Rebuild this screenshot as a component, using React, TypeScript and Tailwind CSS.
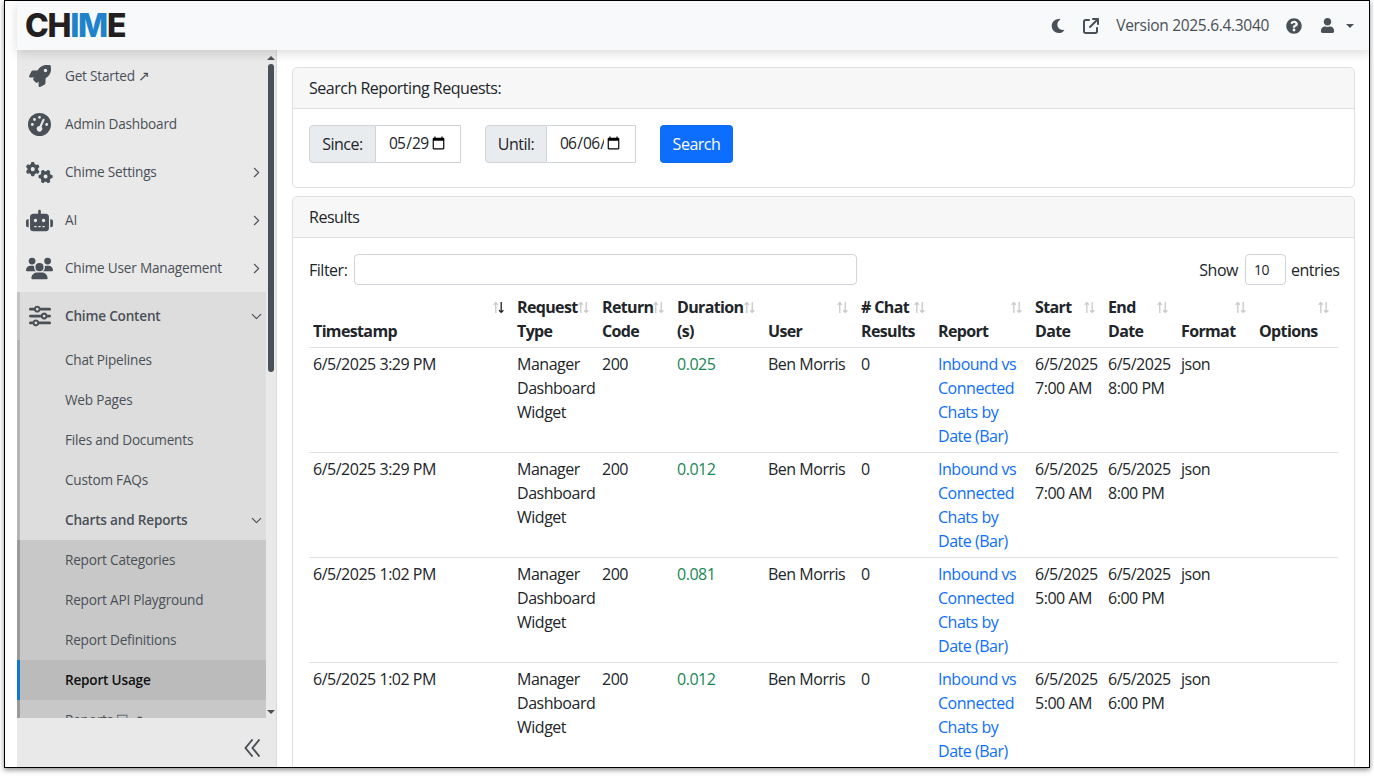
import React from 'react';
import { FaRocket, FaMoon, FaQuestionCircle, FaUser } from 'react-icons/fa';
import { FaGaugeHigh, FaGears, FaRobot, FaUsers, FaSliders, FaArrowUpRightFromSquare } from 'react-icons/fa6';
import { ChevronRight, ChevronDown } from 'lucide-react';

const mainNav = [
  { label: 'Get Started ↗', icon: <FaRocket className="text-[22px]" /> },
  { label: 'Admin Dashboard', icon: <FaGaugeHigh className="text-[23px]" /> },
  { label: 'Chime Settings', icon: <FaGears className="text-[27px]" />, arrow: true },
  { label: 'AI', icon: <FaRobot className="text-[27px]" />, arrow: true },
  { label: 'Chime User Management', icon: <FaUsers className="text-[27px]" />, arrow: true },
];

const contentNav = ['Chat Pipelines', 'Web Pages', 'Files and Documents', 'Custom FAQs'];
const reportNav = ['Report Categories', 'Report API Playground', 'Report Definitions'];

const columns = [
  { label: 'Timestamp', width: 'w-[204px]' },
  { label: 'Request Type', width: 'w-[85px]' },
  { label: 'Return Code', width: 'w-[75px]' },
  { label: 'Duration (s)', width: 'w-[91px]' },
  { label: 'User', width: 'w-[93px]' },
  { label: '# Chat Results', width: 'w-[77px]' },
  { label: 'Report', width: 'w-[97px]' },
  { label: 'Start Date', width: 'w-[73px]' },
  { label: 'End Date', width: 'w-[73px]' },
  { label: 'Format', width: 'w-[78px]' },
  { label: 'Options', width: 'w-[83px]' },
];

const rows = [
  { ts: '6/5/2025 3:29 PM', dur: '0.025', start: '7:00 AM', end: '8:00 PM' },
  { ts: '6/5/2025 3:29 PM', dur: '0.012', start: '7:00 AM', end: '8:00 PM' },
  { ts: '6/5/2025 1:02 PM', dur: '0.081', start: '5:00 AM', end: '6:00 PM' },
  { ts: '6/5/2025 1:02 PM', dur: '0.012', start: '5:00 AM', end: '6:00 PM' },
];

const SortIcon = ({ active }: { active?: boolean }) => (
  <svg viewBox="0 0 12 12" className="absolute right-[8px] top-[10px] h-[13px] w-[13px]" fill="none" strokeWidth="1.2">
    <path d="M3.5 11V1.5M1.5 3.5l2-2 2 2" stroke="#c9c9c9" />
    <path d="M8.5 1v9.5M6.5 8.5l2 2 2-2" stroke={active ? '#222222' : '#c9c9c9'} />
  </svg>
);

const App: React.FC = () => {
  return (
    <div className="w-[1374px] h-[776px] bg-white overflow-hidden pl-1 font-['Open_Sans',sans-serif] tracking-[-0.03em] text-[#212529]">
      <div className="w-[1366px] h-[768px] border border-black bg-white flex flex-col overflow-hidden shadow-[0_2px_5px_rgba(0,0,0,0.45)]">
        <header className="h-[49px] shrink-0 ml-3 bg-[#f8f9fa] flex items-center shadow-[0_3px_10px_rgba(0,0,0,0.14)] z-10 relative">
          <div className="ml-2 text-[32px] leading-none font-['Inter',sans-serif] font-extrabold tracking-[-0.04em] text-[#231f20]">
            CH<span className="text-[#2083c9]">IM</span>E
          </div>
          <div className="ml-auto flex items-center text-[#495057]">
            <FaMoon className="text-[14px] mr-[18px]" />
            <FaArrowUpRightFromSquare className="text-[16px] mr-[17px]" />
            <span className="text-[15.5px] tracking-[-0.02em] mr-[17px]">Version 2025.6.4.3040</span>
            <FaQuestionCircle className="text-[16px] mr-[18px]" />
            <FaUser className="text-[15px] mr-[11px]" />
            <span className="border-x-[4px] border-t-[4px] border-x-transparent border-t-[#495057] mr-[15px]" />
          </div>
        </header>

        <div className="flex flex-1 min-h-0">
          <aside className="ml-3 w-[260px] shrink-0 bg-[#e9e9e9] border-r border-[#d9d9d9] flex flex-col text-[#495057] text-[13.6px] tracking-[-0.015em]">
            <div className="flex h-[668px] overflow-hidden">
              <nav className="w-[249px] shrink-0 overflow-hidden pt-[2px]">
                {mainNav.map((item) => (
                  <div key={item.label} className="h-12 flex items-center">
                    <div className="w-[48px] pr-[3px] flex justify-center">{item.icon}</div>
                    <span className="flex-1">{item.label}</span>
                    {item.arrow && <ChevronRight className="w-[17px] h-[17px] mr-[1px]" strokeWidth={1.5} />}
                  </div>
                ))}
                <div className="h-12 flex items-center bg-[#dddddd] border-l-[3px] border-[#c4c4c4] font-semibold">
                  <div className="w-[45px] pr-[6px] flex justify-center">
                    <FaSliders className="text-[22px]" />
                  </div>
                  <span className="flex-1">Chime Content</span>
                  <ChevronDown className="w-[17px] h-[17px] mr-[1px]" strokeWidth={1.5} />
                </div>
                {contentNav.map((label) => (
                  <div key={label} className="h-10 flex items-center bg-[#dddddd] border-l-[3px] border-[#b4b4b4] pl-[45px]">
                    {label}
                  </div>
                ))}
                <div className="h-10 flex items-center bg-[#dddddd] border-l-[3px] border-[#b4b4b4] pl-[45px] font-semibold">
                  <span className="flex-1">Charts and Reports</span>
                  <ChevronDown className="w-[17px] h-[17px] mr-[1px]" strokeWidth={1.5} />
                </div>
                {reportNav.map((label) => (
                  <div key={label} className="h-10 flex items-center bg-[#c8c8c8] border-l-[3px] border-[#9a9a9a] pl-[45px]">
                    {label}
                  </div>
                ))}
                <div className="h-10 flex items-center bg-[#bbbbbb] border-l-[3px] border-[#0d78d0] pl-[45px] font-semibold text-[#111111]">
                  Report Usage
                </div>
                <div className="h-10 flex items-center bg-[#c8c8c8] border-l-[3px] border-[#9a9a9a] pl-[45px]">
                  Reports ☐ ↗
                </div>
              </nav>
              <div className="flex-1 flex flex-col items-center">
                <span className="mt-[6px] border-x-[4px] border-b-[4px] border-x-transparent border-b-[#495057]" />
                <div className="mt-[4px] w-[6px] h-[308px] rounded-full bg-[#495057]" />
                <span className="mt-auto mb-[4px] border-x-[4px] border-t-[4px] border-x-transparent border-t-[#495057]" />
              </div>
            </div>
            <div className="flex-1 flex justify-end items-center pr-[15px] pt-[10px]">
              <svg viewBox="0 0 17 18" className="w-[17px] h-[18px]" fill="none" stroke="#495057" strokeWidth="1.9">
                <path d="M8.5 0.5 1.5 9l7 8.5M15.5 0.5 8.5 9l7 8.5" />
              </svg>
            </div>
          </aside>

          <main className="flex-1 min-w-0 pl-[15px] pr-[14px] pt-[17px] overflow-hidden">
            <section className="border border-[#dfdfdf] rounded-[5px] h-[121px]">
              <div className="h-[41px] bg-[#f7f7f7] border-b border-[#dfdfdf] flex items-center px-4 rounded-t-[5px]">
                Search Reporting Requests:
              </div>
              <div className="flex p-4 items-start">
                <div className="flex h-[38px]">
                  <span className="w-[67px] flex items-center justify-center bg-[#e9ecef] border border-[#ced4da] rounded-l-[4px]">Since:</span>
                  <input type="date" defaultValue="2025-05-29" className="w-[85px] border border-l-0 border-[#ced4da] px-3 bg-white text-[15.5px] tracking-[-0.05em]" />
                </div>
                <div className="flex h-[38px] ml-6">
                  <span className="w-[62px] flex items-center justify-center bg-[#e9ecef] border border-[#ced4da] rounded-l-[4px]">Until:</span>
                  <input type="date" defaultValue="2025-06-06" className="w-[89px] border border-l-0 border-[#ced4da] px-3 bg-white text-[15.5px] tracking-[-0.05em]" />
                </div>
                <button className="ml-6 w-[73px] h-[38px] bg-[#0d6efd] text-white rounded-[4px]">Search</button>
              </div>
            </section>

            <section className="mt-2 border border-[#dfdfdf] rounded-[5px] h-[600px]">
              <div className="h-[41px] bg-[#f7f7f7] border-b border-[#dfdfdf] flex items-center px-4 rounded-t-[5px]">
                Results
              </div>
              <div className="px-4 pt-4">
                <div className="flex items-center h-[31px]">
                  <span className="w-[39px]">Filter:</span>
                  <input className="ml-[6px] w-[503px] h-[31px] border border-[#ced4da] rounded-[4px] bg-white" />
                  <span className="ml-auto">Show</span>
                  <input defaultValue="10" className="ml-[7px] mr-[5px] w-[41px] h-[31px] border border-[#ced4da] rounded-[4px] bg-white px-2 text-[14px]" />
                  <span className="w-[47px] whitespace-nowrap">entries</span>
                </div>
                <table className="mt-[6px] table-fixed w-[1029px] border-collapse">
                  <thead>
                    <tr className="border-b border-[#dee2e6]">
                      {columns.map((col, i) => (
                        <th key={col.label} className={`${col.width} relative p-1 pr-1 align-bottom text-left font-bold leading-6 tracking-[-0.04em]`}>
                          {col.label}
                          <SortIcon active={i === 0} />
                        </th>
                      ))}
                    </tr>
                  </thead>
                  <tbody>
                    {rows.map((row, i) => (
                      <tr key={i} className="border-b border-[#dee2e6] align-top leading-6">
                        <td className="p-1">{row.ts}</td>
                        <td className="p-1">Manager Dashboard Widget</td>
                        <td className="p-1">200</td>
                        <td className="p-1 text-[#198754]">{row.dur}</td>
                        <td className="p-1">Ben Morris</td>
                        <td className="p-1">0</td>
                        <td className="p-1 text-[#0d6efd]">Inbound vs Connected Chats by Date (Bar)</td>
                        <td className="p-1">6/5/2025 {row.start}</td>
                        <td className="p-1">6/5/2025 {row.end}</td>
                        <td className="p-1">json</td>
                        <td className="p-1"></td>
                      </tr>
                    ))}
                  </tbody>
                </table>
              </div>
            </section>
          </main>
        </div>
      </div>
    </div>
  );
};

export default App;
